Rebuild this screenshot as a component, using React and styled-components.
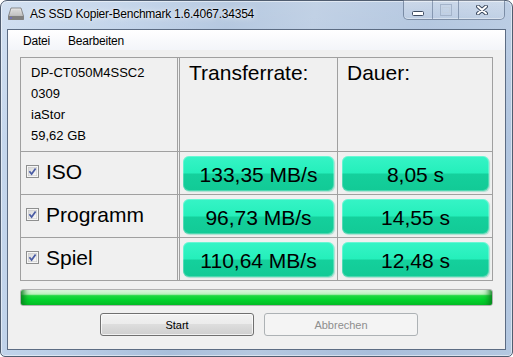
import React from "react";
import styled, { createGlobalStyle } from "styled-components";

const GlobalStyle = createGlobalStyle`
  html, body {
    margin: 0;
    padding: 0;
    background: #ffffff;
  }
  body {
    width: 513px;
    height: 357px;
    overflow: hidden;
    font-family: "Liberation Sans", Arial, sans-serif;
  }
  * {
    box-sizing: border-box;
  }
`;

const driveInfo = ["DP-CT050M4SSC2", "0309", "iaStor", "59,62 GB"];

const results = [
  { name: "ISO", rate: "133,35 MB/s", time: "8,05 s" },
  { name: "Programm", rate: "96,73 MB/s", time: "14,55 s" },
  { name: "Spiel", rate: "110,64 MB/s", time: "12,48 s" },
];

const DriveIcon = () => (
  <svg width="16" height="14" viewBox="0 0 16 14">
    <defs>
      <linearGradient id="hdd" x1="0" y1="0" x2="0" y2="1">
        <stop offset="0" stopColor="#eeeeee" />
        <stop offset="1" stopColor="#a4a4a4" />
      </linearGradient>
    </defs>
    <path d="M3 1 H13 L15.5 9 V12.5 H0.5 V9 Z" fill="url(#hdd)" stroke="#747474" strokeWidth="0.8" />
    <path d="M5 2.5 V8 M7 2.5 V8 M9 2.5 V8 M11 2.5 V8" stroke="#c9c9c9" strokeWidth="0.8" />
    <rect x="0.5" y="9" width="15" height="3.5" fill="#808080" />
    <rect x="2" y="10.3" width="2" height="1.2" fill="#6b6bd6" />
  </svg>
);

const CheckIcon = ({ id }) => (
  <svg width="13" height="13" viewBox="0 0 13 13">
    <defs>
      <linearGradient id={id} x1="0" y1="0" x2="1" y2="1">
        <stop offset="0" stopColor="#d6d6d6" />
        <stop offset="1" stopColor="#fbfbfb" />
      </linearGradient>
    </defs>
    <rect x="0.5" y="0.5" width="12" height="12" fill="#f6f6f6" stroke="#8e8f8f" />
    <rect x="2.25" y="2.25" width="8.5" height="8.5" fill={`url(#${id})`} stroke="#c4c4c4" strokeWidth="0.5" />
    <path d="M3.4 6.3 L5.6 9 L9.6 3.4" fill="none" stroke="#4a5ca4" strokeWidth="1.7" />
  </svg>
);

const App = () => {
  return (
    <>
      <GlobalStyle />
      <Window>
        <TitleBar>
          <TitleIcon>
            <DriveIcon />
          </TitleIcon>
          <TitleText>AS SSD Kopier-Benchmark 1.6.4067.34354</TitleText>
          <Controls>
            <CtrlButton $w={28} $top={11}>
              <svg width="12" height="5" viewBox="0 0 12 5">
                <rect x="0.5" y="0.5" width="11" height="4" rx="1" fill="#ffffff" stroke="#3d4b60" />
              </svg>
            </CtrlButton>
            <CtrlButton $w={26} $top={4}>
              <svg width="12" height="12" viewBox="0 0 12 12">
                <rect x="0.5" y="0.5" width="11" height="11" fill="none" stroke="#a4b4ca" />
                <rect x="2.5" y="3.5" width="7" height="5" fill="none" stroke="#c3d0e0" />
              </svg>
            </CtrlButton>
            <CtrlButton $w={46} $top={5}>
              <svg width="12" height="10" viewBox="0 0 12 10">
                <path d="M2 1.5 L10 8.5 M10 1.5 L2 8.5" stroke="#3d4b60" strokeWidth="4" strokeLinecap="round" />
                <path d="M2 1.5 L10 8.5 M10 1.5 L2 8.5" stroke="#ffffff" strokeWidth="2" strokeLinecap="round" />
              </svg>
            </CtrlButton>
          </Controls>
        </TitleBar>

        <Client>
          <MenuBar>
            <MenuItem>Datei</MenuItem>
            <MenuItem>Bearbeiten</MenuItem>
          </MenuBar>

          <Form>
            <Table>
              <InfoCell>
                {driveInfo.map((line) => (
                  <div key={line}>{line}</div>
                ))}
              </InfoCell>
              <HeaderCell $split $pad={11}>Transferrate:</HeaderCell>
              <HeaderCell $pad={9}>Dauer:</HeaderCell>

              {results.map((r, i) => (
                <React.Fragment key={r.name}>
                  <LabelCell>
                    <CheckBox>
                      <CheckIcon id={`cb${i}`} />
                    </CheckBox>
                    <LabelText>{r.name}</LabelText>
                  </LabelCell>
                  <ValueCell $split $left={5}>
                    <ValueBox>{r.rate}</ValueBox>
                  </ValueCell>
                  <ValueCell $left={4}>
                    <ValueBox>{r.time}</ValueBox>
                  </ValueCell>
                </React.Fragment>
              ))}
            </Table>

            <Progress>
              <ProgressFill style={{ width: "100%" }} />
            </Progress>

            <ButtonRow>
              <Button>Start</Button>
              <Button disabled>Abbrechen</Button>
            </ButtonRow>
          </Form>
        </Client>
      </Window>
    </>
  );
};

export default App;

const Window = styled.div`
  width: 513px;
  height: 357px;
  display: flex;
  flex-direction: column;
  padding: 0 6px 6px;
  border: 1px solid #505d70;
  border-radius: 7px 7px 5px 5px;
  background:
    linear-gradient(to bottom, rgba(255, 255, 255, 0.18), rgba(255, 255, 255, 0) 40%),
    linear-gradient(
      100deg,
      #c8d9ee 0%,
      #b9cde6 22%,
      #a9bfdb 40%,
      #b5c8e0 55%,
      #a8bedb 75%,
      #b4c8e1 100%
    );
  box-shadow: inset 0 0 0 1px rgba(255, 255, 255, 0.5);
`;

const TitleBar = styled.div`
  height: 28px;
  display: flex;
  align-items: flex-start;
  flex-shrink: 0;
`;

const TitleIcon = styled.div`
  margin: 6px 0 0 1px;
  width: 16px;
  height: 14px;
  display: flex;
`;

const TitleText = styled.div`
  margin: 6px 0 0 6px;
  font-family: "Liberation Sans", Arial, sans-serif;
  font-size: 12px;
  line-height: 14px;
  letter-spacing: -0.25px;
  color: #000000;
  text-shadow: 0 0 6px rgba(255, 255, 255, 0.9), 0 0 2px rgba(255, 255, 255, 0.8);
  white-space: nowrap;
`;

const Controls = styled.div`
  margin: -1px 1px 0 auto;
  height: 20px;
  display: flex;
  border: 1px solid rgba(62, 82, 112, 0.55);
  border-top: none;
  border-radius: 0 0 5px 5px;
  background: linear-gradient(to bottom, rgba(255, 255, 255, 0.28), rgba(255, 255, 255, 0.08));
  box-shadow: inset 0 -1px 0 rgba(255, 255, 255, 0.4);
  overflow: hidden;
`;

const CtrlButton = styled.div`
  width: ${(p) => p.$w}px;
  display: flex;
  justify-content: center;
  align-items: flex-start;
  padding-top: ${(p) => p.$top}px;
  & + & {
    border-left: 1px solid rgba(62, 82, 112, 0.45);
  }
  svg {
    display: block;
  }
`;

const Client = styled.div`
  flex: 1;
  display: flex;
  flex-direction: column;
  border: 1px solid #5c6c83;
  background: #f0f0f0;
`;

const MenuBar = styled.div`
  height: 20px;
  display: flex;
  padding-left: 6px;
  background: linear-gradient(to bottom, #ffffff, #f3f5f9);
`;

const MenuItem = styled.div`
  padding: 1px 9px 0;
  font-size: 12px;
  line-height: 20px;
  letter-spacing: -0.2px;
  color: #000000;
`;

const Form = styled.div`
  flex: 1;
  display: flex;
  flex-direction: column;
  padding: 7px 0 0 12px;
`;

const Table = styled.div`
  width: 473px;
  display: grid;
  grid-template-columns: 156px 159px 154px;
  grid-template-rows: 93px 42px 42px 42px;
  gap: 1px;
  border: 1px solid #a0a0a0;
  background: #a0a0a0;
`;

const Cell = styled.div`
  background: ${(p) =>
    p.$split
      ? "linear-gradient(to right, #f0f0f0 1px, #a0a0a0 1px, #a0a0a0 2px, #f0f0f0 2px)"
      : "#f0f0f0"};
`;

const InfoCell = styled(Cell)`
  padding: 4px 10px;
  font-size: 13px;
  line-height: 21px;
  color: #000000;
`;

const HeaderCell = styled(Cell)`
  padding: 4px ${(p) => p.$pad}px;
  font-size: 21px;
  line-height: 21px;
  color: #000000;
`;

const LabelCell = styled(Cell)`
  display: flex;
  align-items: flex-start;
  padding-left: 5px;
`;

const CheckBox = styled.div`
  margin-top: 13px;
  width: 13px;
  height: 13px;
  svg {
    display: block;
  }
`;

const LabelText = styled.div`
  margin: 9px 0 0 7px;
  font-size: 21px;
  line-height: 21px;
  color: #000000;
`;

const ValueCell = styled(Cell)`
  padding: 4px 3px 3px ${(p) => p.$left}px;
`;

const ValueBox = styled.div`
  height: 35px;
  border-radius: 6px;
  display: flex;
  align-items: center;
  justify-content: center;
  padding-top: 2px;
  font-size: 21px;
  color: #000000;
  background: linear-gradient(
    to bottom,
    #36f4c6 0%,
    #25efbb 48%,
    #14d09c 52%,
    #12ca96 100%
  );
  box-shadow: inset 0 0 0 1px rgba(255, 255, 255, 0.25), 1px 1px 1px rgba(140, 215, 195, 0.7);
`;

const Progress = styled.div`
  margin-top: 8px;
  width: 473px;
  height: 17px;
  border: 1px solid #b0b0b0;
  border-radius: 3px;
  background: #e6e6e6;
  overflow: hidden;
`;

const ProgressFill = styled.div`
  height: 100%;
  background: linear-gradient(
    to bottom,
    #e2f9e2 0%,
    #b9f0ba 28%,
    #1fd83f 38%,
    #02d42c 65%,
    #05bd27 100%
  );
  box-shadow: inset 9px 0 6px -6px #0a7d1e, inset -9px 0 6px -6px #0a7d1e;
`;

const ButtonRow = styled.div`
  margin-top: 7px;
  display: flex;
  gap: 10px;
  padding-left: 80px;
`;

const Button = styled.button`
  width: 154px;
  height: 23px;
  padding: 0;
  border-radius: 3px;
  font-family: "Liberation Sans", Arial, sans-serif;
  font-size: 11px;
  color: #000000;
  border: 1px solid #707070;
  background: linear-gradient(to bottom, #f2f2f2 0%, #ebebeb 50%, #dddddd 50%, #cfcfcf 100%);
  box-shadow: inset 0 0 0 1px rgba(255, 255, 255, 0.7);

  &:disabled {
    color: #8e8e8e;
    border-color: #adb2b5;
    background: #f4f4f4;
    box-shadow: none;
  }
`;
